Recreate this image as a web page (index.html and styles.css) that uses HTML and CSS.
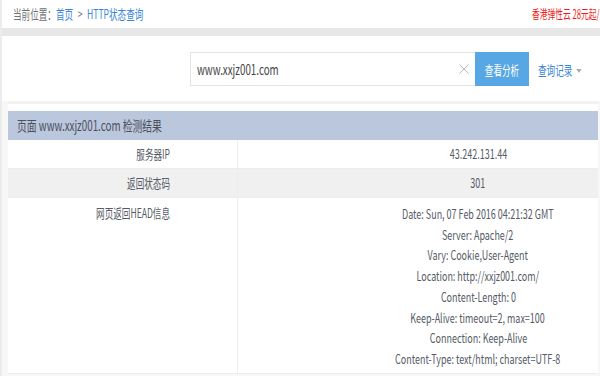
FILE: index.html
```html
<!DOCTYPE html>
<html lang="zh-CN">
<head>
<meta charset="utf-8">
<title>HTTP状态查询</title>
<link rel="stylesheet" href="styles.css">
</head>
<body>
<div class="page">
  <div class="topbar">
    <div class="crumb"><span class="sq sq-l">当前位置：<a class="lnk" href="#">首页</a><span class="gt">&gt;</span><a class="lnk" href="#">HTTP状态查询</a></span></div>
    <div class="ad"><span class="sq sq-l">香港弹性云 28元起/月</span></div>
  </div>
  <div class="band"></div>
  <div class="search">
    <div class="inputbox"><span class="sq sq-l sq-w">www.xxjz001.com</span><svg class="clear" width="10" height="10" viewBox="0 0 10 10"><path d="M0.5 0.5L9.5 9.5M9.5 0.5L0.5 9.5" stroke="#b8b8b8" stroke-width="1" fill="none"/></svg></div>
    <button class="btn"><span class="sq">查看分析</span></button>
    <div class="hist"><span class="sq sq-l">查询记录<span class="caret"></span></span></div>
  </div>
  <div class="content">
    <div class="result">
      <div class="rhead"><span class="sq sq-l sq-w">页面 www.xxjz001.com 检测结果</span></div>
      <div class="row">
        <div class="k"><span class="sq sq-r">服务器IP</span></div>
        <div class="v"><span class="sq sq-n">43.242.131.44</span></div>
      </div>
      <div class="row alt">
        <div class="k"><span class="sq sq-r">返回状态码</span></div>
        <div class="v"><span class="sq sq-n">301</span></div>
      </div>
      <div class="row tall">
        <div class="k"><span class="sq sq-r">网页返回HEAD信息</span></div>
        <div class="v lines">
          <span class="sq sq-n">Date: Sun, 07 Feb 2016 04:21:32 GMT</span>
          <span class="sq sq-n">Server: Apache/2</span>
          <span class="sq sq-n">Vary: Cookie,User-Agent</span>
          <span class="sq sq-n">Location: http://xxjz001.com/</span>
          <span class="sq sq-n">Content-Length: 0</span>
          <span class="sq sq-n">Keep-Alive: timeout=2, max=100</span>
          <span class="sq sq-n">Connection: Keep-Alive</span>
          <span class="sq sq-n">Content-Type: text/html; charset=UTF-8</span>
        </div>
      </div>
    </div>
  </div>
</div>
</body>
</html>
```
FILE: styles.css
```css
html, body {
  margin: 0;
  padding: 0;
  overflow: hidden;
  background: #fff;
}
body {
  font-family: "Noto Sans CJK SC", "Noto Sans", sans-serif;
  font-size: 13px;
  color: #555b66;
}
.page {
  border-left: 2px solid #ececec;
  height: 376px;
  box-sizing: border-box;
}
.sq {
  display: inline-block;
  white-space: nowrap;
  transform: scaleX(0.66);
  transform-origin: center;
}
.sq-l { transform-origin: left center; }
.sq-r { transform-origin: right center; }
.sq-w { transform: scaleX(0.7); }
.sq-n { transform: scaleX(0.69); }

.topbar {
  height: 28px;
  display: flex;
  align-items: center;
  padding-left: 11px;
  line-height: 28px;
  color: #707070;
}
.crumb { flex: none; }
.lnk { color: #3a86d6; text-decoration: none; }
.gt { margin: 0 7px; color: #777; }
.ad {
  margin-left: auto;
  width: 68px;
  overflow: hidden;
  color: #ee1c25;
  font-size: 12.5px;
  flex: none;
}
.ad .sq { transform: scaleX(0.62); }
.band {
  height: 8px;
  background: #e7e7e7;
}
.search {
  display: flex;
  align-items: center;
  padding: 16px 0 15px 188px;
}
.inputbox {
  flex: none;
  box-sizing: border-box;
  width: 285px;
  height: 34px;
  border: 1px solid #dfe3ec;
  border-right: none;
  display: flex;
  align-items: center;
  padding-left: 6px;
  color: #444;
  font-size: 14px;
}
.clear {
  flex: none;
  margin-left: auto;
  margin-right: 6px;
}
.btn {
  flex: none;
  width: 54px;
  height: 34px;
  border: none;
  background: #56a7e3;
  color: #fff;
  font-family: inherit;
  font-size: 13px;
  padding: 0;
  white-space: nowrap;
  display: flex;
  align-items: center;
  justify-content: center;
}
.hist {
  flex: none;
  margin-left: 9px;
  color: #3a86d6;
  font-size: 13px;
}
.caret {
  display: inline-block;
  width: 0;
  height: 0;
  border-left: 4px solid transparent;
  border-right: 4px solid transparent;
  border-top: 4px solid #aaa;
  margin-left: 6px;
  vertical-align: middle;
}
.content {
  background: #f7f7f7;
  padding: 0 2px 2px 6px;
  height: 275px;
}
.result {
  background: #fff;
  border-top: 3px solid #f2f2f2;
  padding-top: 7px;
}
.rhead {
  height: 29px;
  line-height: 29px;
  background: #bbc7dd;
  padding-left: 9px;
  color: #4a505c;
  font-size: 14px;
}
.row {
  display: flex;
  border-bottom: 1px solid #ededed;
}
.row.alt { background: #f0f0f0; }
.k {
  box-sizing: border-box;
  width: 230px;
  flex: none;
  text-align: right;
  padding-right: 67px;
  border-right: 1px solid #ededed;
  line-height: 28px;
}
.v {
  flex: 1;
  text-align: center;
  padding-left: 120px;
  line-height: 28px;
}
.row.tall { height: 176px; box-sizing: border-box; }
.row.tall .k { padding-top: 5px; line-height: 20.7px; }
.lines {
  display: flex;
  flex-direction: column;
  align-items: center;
  padding-top: 6px;
  line-height: 20.7px;
}
```
